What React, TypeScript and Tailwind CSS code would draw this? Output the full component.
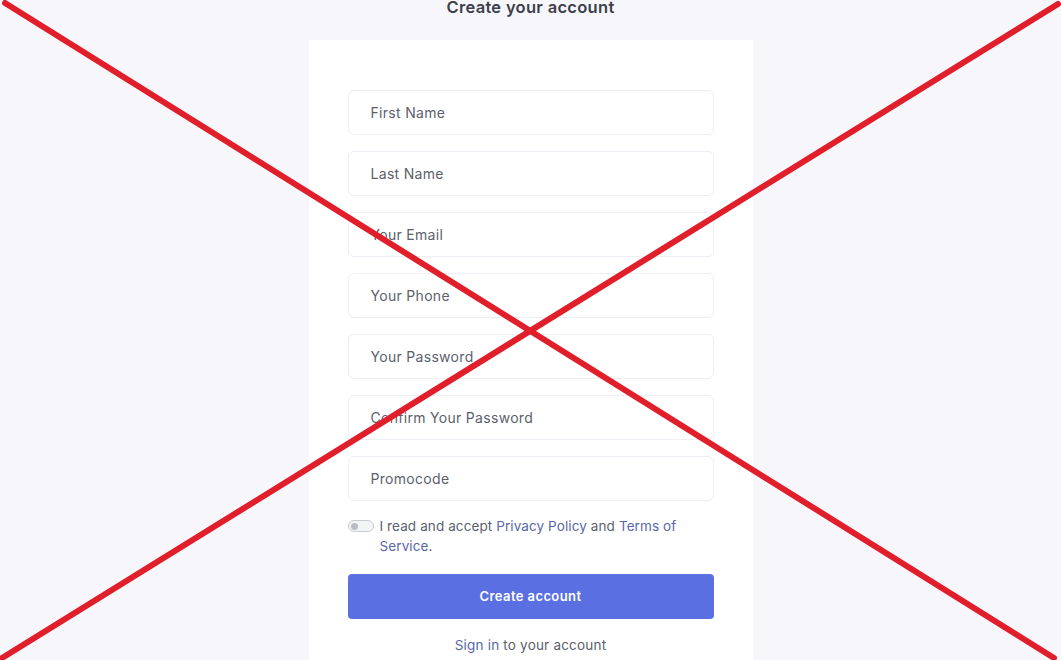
import React from 'react';

const fields = [
    'First Name',
    'Last Name',
    'Your Email',
    'Your Phone',
    'Your Password',
    'Confirm Your Password',
    'Promocode',
];

const CrossOut = () => (
    <svg
        className="pointer-events-none absolute inset-0 h-[660px] w-[1061px]"
        viewBox="0 0 1061 660"
    >
        <line x1="5" y1="3" x2="1054" y2="658" stroke="#e01f2b" strokeWidth="6" strokeLinecap="round" />
        <line x1="1058" y1="4" x2="2" y2="658" stroke="#e01f2b" strokeWidth="6" strokeLinecap="round" />
    </svg>
);

export default function App() {
    return (
        <div
            className="relative h-[660px] w-full overflow-hidden bg-[#f7f7fb] text-[#5b5f6b]"
            style={{ fontFamily: 'Inter, "Noto Sans", sans-serif' }}
        >
            <h1 className="text-center text-[16.5px] font-semibold leading-[14px] tracking-[0.3px] text-[#3c404b]">
                Create your account
            </h1>
            <div className="mx-auto mt-[26px] w-[444px] bg-white px-[39px] pt-[50px] pb-10">
                <div className="flex flex-col gap-[16px]">
                    {fields.map((f) => (
                        <div
                            key={f}
                            className="flex h-[45px] items-center rounded-md border border-[#eceef3] px-[22px] text-[14px] tracking-[0.3px] text-[#5b5f6b]"
                        >
                            {f}
                        </div>
                    ))}
                </div>
                <div className="mt-[15px] flex items-start gap-[6px] text-[13.5px] leading-[20px] tracking-[0.1px]">
                    <span className="mt-[4px] flex h-[12px] w-[26px] shrink-0 items-center rounded-full border border-[#c9ccd3] bg-[#f3f4f6] px-[2px]">
                        <span className="h-[7px] w-[7px] rounded-full bg-[#b9bcc4]" />
                    </span>
                    <p className="pr-6">
                        I read and accept <span className="text-[#5867a9]">Privacy Policy</span> and{' '}
                        <span className="text-[#5867a9]">Terms of Service</span>.
                    </p>
                </div>
                <button className="mt-[18px] flex h-[45px] w-full items-center justify-center rounded-[4px] bg-[#5a70e2] text-[13px] font-semibold tracking-[0.4px] text-white">
                    Create account
                </button>
                <p className="mt-[16px] text-center text-[13.5px] tracking-[0.2px]">
                    <span className="text-[#5867a9]">Sign in</span> to your account
                </p>
            </div>
            <CrossOut />
        </div>
    );
}
